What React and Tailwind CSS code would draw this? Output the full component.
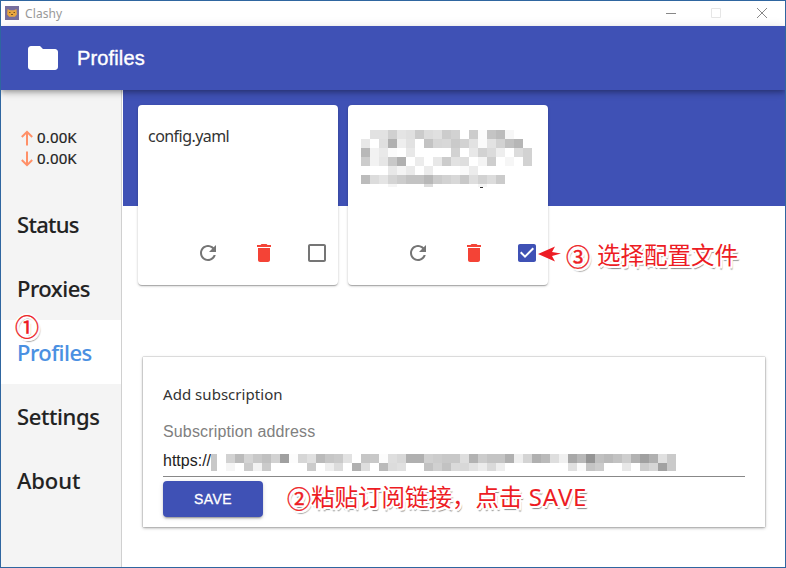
const CARD_ROWS = [
  '-- e2 e2 d0 e4 e0 cb dc e0 cc d2 -- cc fb c4 bc f7 -- --',
  'e8 -- df b0 ee e2 -- c3 d6 d8 ca d2 e2 fa e2 d2 c0 b6 --',
  'b8 f2 e9 fb -- e8 -- -- -- -- d2 -- e8 d2 db ee -- dc d2',
  'cc f2 e6 c8 b0 -- ec -- e8 cc e2 de -- f4 ce -- f6 -- d2',
  '-- -- -- e8 f4 ea -- ec -- -- -- fa ec -- -- -- -- -- --',
  'bc dc e4 d4 cc c3 c3 b8 cb d2 d8 c8 de d2 dc cb -- -- --',
];

const CARD_TAIL = ['-- -- -- f5 -- -- -- dc -- -- -- -- -- f5 -- -- -- -- --'];

const URL_ROWS = [
  'd2 bb d4 c8 c0 d2 a0 fc d6 e0 ba c6 ca e2 -- c6 c8 fc de d8 b0 b0 d0 cc c8 c8 de b2 cc c4 c4 b0 ee d4 b0 ba de f0 a8 b8 94 c0 ba c2 ce b2 a0 b0 e0 ca',
  'f5 -- cb f2 ca -- -- -- -- cb -- ee dc -- b0 de -- ba dc e0 -- -- c2 d0 c2 da d8 e2 ec da ee -- -- -- -- -- -- -- e0 fa c4 cc -- -- e8 -- cc d6 a2 ca',
];

function Mosaic({ rows, className = '' }) {
  return (
    <div className={className} aria-hidden="true">
      {rows.map((row, r) => (
        <div key={r} className="flex h-[9px]">
          {row.split(' ').map((c, i) => (
            <span
              key={i}
              className="h-full w-[9px] shrink-0"
              style={{ background: c === '--' ? 'transparent' : `#${c}${c}${c}` }}
            />
          ))}
        </div>
      ))}
    </div>
  );
}

function Icon({ d, className }) {
  return (
    <svg viewBox="0 0 24 24" className={className} fill="currentColor">
      <path d={d} />
    </svg>
  );
}

const FOLDER = 'M10 4H4c-1.1 0-1.99.9-1.99 2L2 18c0 1.1.9 2 2 2h16c1.1 0 2-.9 2-2V8c0-1.1-.9-2-2-2h-8l-2-2z';
const REFRESH =
  'M17.65 6.35C16.2 4.9 14.21 4 12 4c-4.42 0-7.99 3.58-7.99 8s3.57 8 7.99 8c3.73 0 6.84-2.55 7.73-6h-2.08c-.82 2.33-3.04 4-5.65 4-3.31 0-6-2.69-6-6s2.69-6 6-6c1.66 0 3.14.69 4.22 1.78L13 11h7V4l-2.35 2.35z';
const TRASH = 'M6 19c0 1.1.9 2 2 2h8c1.1 0 2-.9 2-2V7H6v12zM19 4h-3.5l-1-1h-5l-1 1H5v2h14V4z';
const BOX = 'M19 5v14H5V5h14m0-2H5c-1.1 0-2 .9-2 2v14c0 1.1.9 2 2 2h14c1.1 0 2-.9 2-2V5c0-1.1-.9-2-2-2z';
const BOX_CHECKED =
  'M19 3H5c-1.11 0-2 .9-2 2v14c0 1.1.89 2 2 2h14c1.11 0 2-.9 2-2V5c0-1.1-.89-2-2-2zm-9 14l-5-5 1.41-1.41L10 14.17l7.59-7.59L19 8l-9 9z';

function Card({ checked, children }) {
  return (
    <div className="relative flex h-[180px] w-[200px] shrink-0 flex-col rounded-[4px] bg-white shadow-[0_1px_3px_rgba(0,0,0,0.2),0_1px_1px_rgba(0,0,0,0.14),0_2px_1px_-1px_rgba(0,0,0,0.12)]">
      <div className="flex-1">{children}</div>
      <div className="flex h-[64px] items-center pl-[58px] text-[#757575]">
        <Icon d={REFRESH} className="size-6" />
        <Icon d={TRASH} className="ml-8 size-6 text-[#f44336]" />
        <Icon d={checked ? BOX_CHECKED : BOX} className={checked ? 'ml-[29px] size-6 text-[#3f51b5]' : 'ml-[29px] size-6'} />
      </div>
    </div>
  );
}

function NavItem({ label, active, spacing }) {
  return (
    <div className={`flex h-16 items-center pl-4 text-[22px] font-medium ${spacing} ${active ? 'bg-white text-[#4a90e2]' : 'text-[#222]'}`}>
      <span className="leading-[30px] [-webkit-text-stroke:0.1px_currentColor]">{label}</span>
    </div>
  );
}

function Rate({ up, value }) {
  return (
    <div className="flex h-[21px] items-center text-[15px] text-[#222]">
      <svg viewBox="0 0 12 16" className="mr-1 h-4 w-3" fill="none" stroke="#ff9068" strokeWidth="2">
        <path d={up ? 'M6 15.5V2M.8 7 6 1.8 11.2 7' : 'M6 .5V14M.8 9 6 14.2 11.2 9'} />
      </svg>
      <span className="tracking-[0.15px] [-webkit-text-stroke:0.2px_currentColor]">{value}</span>
    </div>
  );
}

const NOTE =
  "absolute whitespace-nowrap leading-[30px] text-[#ed1c24] font-['Noto_Sans_CJK_SC',sans-serif] [text-shadow:-2px_0_#fff,2px_0_#fff,0_-2px_#fff,0_2px_#fff,1px_1px_#fff,-1px_-1px_#fff,2px_2px_#fff,-1px_2px_#fff,2px_3px_1px_#888]";

export default function App() {
  return (
    <div className="relative flex h-[568px] w-[786px] flex-col overflow-hidden border border-[#2f66a0] bg-white font-['Noto_Sans','Open_Sans',sans-serif]">
      <div className="flex h-[25px] shrink-0 items-center pl-[4px]">
        <svg viewBox="0 0 14 14" className="size-[14px] -translate-y-px">
          <path fill="#776f9e" d="M0 0h14v14H0z" />
          <path fill="#e9a63f" d="M2.5 3 5 4.2h4L11.5 3l.4 5.5-2 2.2H4.200L2.100 8.500z" />
          <path fill="#775426" d="M4 6h1.500v1H4zM8.500 6H10v1H8.500zM6 8h2v1H6z" />
        </svg>
        <span className="ml-[6px] text-[12px] leading-[18px] tracking-[0.1px] text-[#999]">Clashy</span>
        <svg viewBox="0 0 104 12" className="ml-auto mr-[16px] h-3 w-[104px] -translate-y-px" fill="none" stroke="#888">
          <path d="M1 6.500h10" />
          <path stroke="#e6e6e6" d="M46.500 1.500h9v9h-9z" />
          <path d="M92 1l10 10M102 1 92 11" />
        </svg>
      </div>

      <header className="relative z-10 flex h-16 shrink-0 items-center bg-[#3f51b5] pl-[24px] text-white shadow-[0_2px_4px_-1px_rgba(0,0,0,0.2),0_4px_5px_rgba(0,0,0,0.14),0_1px_10px_rgba(0,0,0,0.12)]">
        <Icon d={FOLDER} className="size-9" />
        <h1 className="ml-4 font-['Liberation_Sans',sans-serif] text-[20px] font-normal tracking-[0.15px] [-webkit-text-stroke:0.4px_white]">Profiles</h1>
      </header>

      <div className="flex min-h-0 flex-1">
        <aside className="w-[121px] shrink-0 border-r border-[#d0d0d0] bg-[#f4f4f4]">
          <div className="h-[102px] pl-[20px] pt-[37px]">
            <Rate up value="0.00K" />
            <Rate value="0.00K" />
          </div>
          <nav>
            <NavItem label="Status" spacing="tracking-[-0.7px]" />
            <NavItem label="Proxies" spacing="tracking-[-0.5px]" />
            <NavItem label="Profiles" active spacing="tracking-[-0.5px]" />
            <NavItem label="Settings" spacing="tracking-[-0.4px]" />
            <NavItem label="About" spacing="tracking-[-0.1px]" />
          </nav>
        </aside>

        <main className="ml-px min-w-0 flex-1">
          <div className="flex h-[116px] gap-[10px] bg-[#3f51b5] pl-[15px] pt-[15px]">
            <Card>
              <p className="pl-[10px] pt-[19px] text-[16px] leading-6 tracking-[-0.55px] text-[#333]">config.yaml</p>
            </Card>
            <Card checked>
              <Mosaic rows={CARD_ROWS} className="pl-[13px] pt-[25px]" />
              <Mosaic rows={CARD_TAIL} className="h-[3px] overflow-hidden pl-[13px]" />
              <div className="ml-[132px] h-px w-[3px] bg-[#333]" />
            </Card>
          </div>

          <section className="ml-[20px] mt-[151px] flex h-[170px] w-[622px] flex-col items-start px-[20px] pt-[25px] shadow-[0_1px_3px_rgba(0,0,0,0.35),0_0_1px_rgba(0,0,0,0.5)]">
            <h2 className="text-[15px] font-normal leading-6 tracking-[0.04px] text-[#333]">Add subscription</h2>
            <label className="mt-[16px] font-['Liberation_Sans',sans-serif] text-[16px] leading-[20px] tracking-[0.15px] text-[#808080]">Subscription address</label>
            <div className="mt-[6px] flex h-[29px] w-[582px] border-b border-[#888]">
              <span className="w-[48px] pt-[3px] font-['Liberation_Sans',sans-serif] text-[16px] leading-5 text-[#222]">https://</span>
              <span className="mt-[6px] h-[17px] w-[6px] bg-[#c8c8c8]" />
              <Mosaic rows={URL_ROWS} className="ml-[9px] mt-[6px] h-[17px] overflow-hidden" />
            </div>
            <button className="mt-[4px] h-9 w-[100px] rounded-[4px] bg-[#3f51b5] font-['Liberation_Sans',sans-serif] text-[14px] tracking-[0.4px] text-white shadow-[0_3px_1px_-2px_rgba(0,0,0,0.2),0_2px_2px_rgba(0,0,0,0.14),0_1px_5px_rgba(0,0,0,0.12)] [-webkit-text-stroke:0.3px_white]">
              SAVE
            </button>
          </section>
        </main>
      </div>

      <span className={`${NOTE} left-[14px] top-[310px] z-20 text-[24px] [-webkit-text-stroke:0.4px_#ed1c24]`}>①</span>
      <svg viewBox="0 0 26 18" className="absolute left-[536px] top-[244px] h-[18px] w-[26px]" fill="#ed1c24">
        <path d="M1 9 18 1.500 15 7l9 1.500L15 11l3 5.500z" />
      </svg>
      <span className={`${NOTE} left-[565px] top-[240px] text-[24px] [-webkit-text-stroke:0.4px_#ed1c24]`}>③</span>
      <span className={`${NOTE} left-[596px] top-[238px] text-[23.500px]`}>选择配置文件</span>
      <span className={`${NOTE} left-[286px] top-[482px] text-[24px] [-webkit-text-stroke:0.4px_#ed1c24]`}>②</span>
      <span className={`${NOTE} left-[310px] top-[480px] text-[23.500px]`}>
        粘贴订阅链接，点击 <span className="ml-px font-['Noto_Sans',sans-serif] text-[24px] tracking-[0.8px]">SAVE</span>
      </span>
    </div>
  );
}
